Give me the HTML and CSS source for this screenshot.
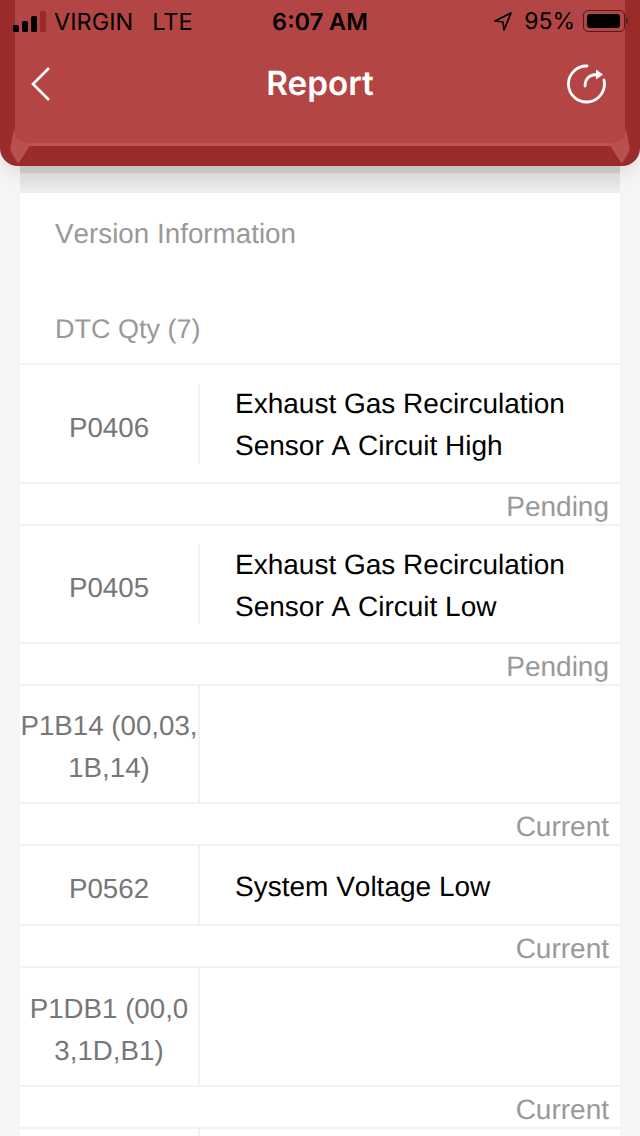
FILE: index.html
```html
<!DOCTYPE html>
<html>
<head>
    <title>Report</title>
    <meta charset="UTF-8">
    <link rel="stylesheet" href="styles.css">
</head>

<body>
    <div class="header">
        <div class="statusBar">
            <div class="statusLeft">
                <svg class="signal" width="33" height="21" viewBox="0 0 33 21">
                    <rect x="0" y="14" width="6" height="7" rx="1.5" fill="#000"/>
                    <rect x="9" y="10" width="6" height="11" rx="1.5" fill="#000"/>
                    <rect x="18" y="5" width="6" height="16" rx="1.5" fill="#000"/>
                    <rect x="27" y="0" width="6" height="21" rx="1.5" fill="#9b2b2a"/>
                </svg>
                <span class="carrier">VIRGIN</span>
                <span class="network">LTE</span>
            </div>
            <div class="clock">6:07 AM</div>
            <div class="statusRight">
                <svg class="arrow" width="18" height="19" viewBox="0 0 18 19">
                    <path d="M17 1 L1 9 L9 10 L10 18 Z" fill="none" stroke="#000" stroke-width="1.7" stroke-linejoin="round"/>
                </svg>
                <span class="percent">95%</span>
                <div class="battery"><div class="batteryFill"></div></div>
                <div class="batteryNub"></div>
            </div>
        </div>
        <div class="navBar">
            <svg class="backIcon" width="20" height="36" viewBox="0 0 20 36">
                <path d="M18 2 L2 18 L18 34" fill="none" stroke="#fff" stroke-width="2.6"/>
            </svg>
            <div class="navTitle">Report</div>
            <svg class="refreshIcon" width="40" height="40" viewBox="0 0 40 40">
                <path d="M21 2 A18 18 0 1 0 38 16" fill="none" stroke="#fff" stroke-width="2.8" stroke-linecap="round"/>
                <path d="M19 22 C19 15 23 10.5 31 10.5" fill="none" stroke="#fff" stroke-width="2.8" stroke-linecap="round"/>
                <path d="M30 5.5 L37 10.5 L30 15.5 Z" fill="#fff"/>
            </svg>
        </div>
        <svg class="bevel bevelLeft" width="32" height="40" viewBox="0 0 32 40">
            <path d="M14 1 L16 12 L31 17 L18 37 L10 23 Z" fill="#b7504e"/>
        </svg>
        <svg class="bevel bevelRight" width="32" height="40" viewBox="0 0 32 40">
            <path d="M14 1 L16 12 L31 17 L18 37 L10 23 Z" fill="#b7504e"/>
        </svg>
    </div>
    <div class="shade"></div>

    <div class="card">
        <div class="infoTitle versionTitle">Version Information</div>
        <div class="infoTitle qtyTitle">DTC Qty (7)</div>

        <div class="dtcRow tallPlus">
            <div class="dtcCode oneLine">P0406</div>
            <div class="dtcText">Exhaust Gas Recirculation<br>Sensor A Circuit High</div>
        </div>
        <div class="dtcStatus">Pending</div>

        <div class="dtcRow tall">
            <div class="dtcCode oneLine">P0405</div>
            <div class="dtcText">Exhaust Gas Recirculation<br>Sensor A Circuit Low</div>
        </div>
        <div class="dtcStatus">Pending</div>

        <div class="dtcRow tall full">
            <div class="dtcCode">P1B14 (00,03,<br>1B,14)</div>
            <div class="dtcText"></div>
        </div>
        <div class="dtcStatus">Current</div>

        <div class="dtcRow short full">
            <div class="dtcCode oneLine">P0562</div>
            <div class="dtcText">System Voltage Low</div>
        </div>
        <div class="dtcStatus">Current</div>

        <div class="dtcRow tallPlus full">
            <div class="dtcCode">P1DB1 (00,0<br>3,1D,B1)</div>
            <div class="dtcText"></div>
        </div>
        <div class="dtcStatus">Current</div>

        <div class="dtcRow lastRow full">
            <div class="dtcCode"></div>
        </div>
    </div>
</body>

</html>
```

FILE: styles.css
```css
html, body {
    margin: 0;
    height: 1136px;
    overflow: hidden;
}

body {
    background-color: #f5f5f5;
    font-family: "Liberation Sans", Arial, sans-serif;
    font-kerning: none;
    text-rendering: geometricPrecision;
}

.header {
    height: 166px;
    position: relative;
    box-sizing: border-box;
    background:
        linear-gradient(#b34644, #b34644) 15px 0 / 610px 143px no-repeat,
        linear-gradient(#bd5654, #bd5654) 15px 143px / 610px 3px no-repeat,
        #9b2b2a;
    border-radius: 0 0 18px 18px;
    box-shadow: 0 9px 14px rgba(0, 0, 0, 0.07);
}

.statusBar {
    height: 42px;
    display: grid;
    grid-template-columns: 1fr auto 1fr;
    align-items: center;
    color: #000;
    font-family: Inter, "Liberation Sans", sans-serif;
    font-kerning: normal;
    font-size: 23.5px;
}

.statusLeft {
    display: flex;
    align-items: center;
    padding-left: 13px;
}

.signal {
    margin-right: 8px;
}

.network {
    margin-left: 19px;
}

.clock {
    font-weight: 600;
    font-size: 23.5px;
}

.statusRight {
    display: flex;
    align-items: center;
    justify-content: flex-end;
    padding-right: 12px;
}

.percent {
    margin-left: 12px;
    font-size: 23px;
}

.battery {
    width: 42px;
    height: 22px;
    margin-left: 8px;
    border: 1px solid #4d1c1c;
    border-radius: 5px;
    padding: 3px;
    box-sizing: border-box;
    flex-shrink: 0;
}

.batteryFill {
    height: 100%;
    width: 33px;
    background-color: #000;
    border-radius: 3px;
}

.batteryNub {
    width: 2px;
    height: 6px;
    margin-left: 1px;
    background-color: #5a2020;
}

.navBar {
    height: 84px;
    display: grid;
    grid-template-columns: 1fr auto 1fr;
    align-items: center;
    padding: 0 31px;
}

.navTitle {
    color: #fff;
    font-size: 33.3px;
    font-weight: 600;
    font-family: Inter, "Liberation Sans", sans-serif;
    font-kerning: normal;
}

.refreshIcon {
    justify-self: end;
    margin-right: 3px;
}

.bevel {
    position: absolute;
    top: 127px;
}

.bevelLeft {
    left: 0;
}

.bevelRight {
    right: 0;
    transform: scaleX(-1);
}

.shade {
    position: relative;
    height: 27px;
    margin: 0 20px;
    background: linear-gradient(#c9c5c4, #c9c5c4 6px, #dcd9d8 8px, #efefef 100%);
}

.card {
    margin: 0 20px;
    background-color: #fff;
}

.infoTitle {
    color: #999;
    font-size: 27.8px;
    padding-left: 35px;
}

.versionTitle {
    height: 96px;
    line-height: 82px;
}

.qtyTitle {
    height: 74px;
    line-height: 80px;
    font-size: 27px;
    border-bottom: 2px solid #f2f2f2;
}

.dtcRow {
    display: flex;
    align-items: center;
    box-sizing: border-box;
    border-bottom: 2px solid #f2f2f2;
}

.tall {
    height: 118px;
}

.tallPlus {
    height: 119px;
}

.short {
    height: 80px;
}

.lastRow {
    height: 7px;
    border-bottom: none;
}

.dtcCode {
    width: 180px;
    height: 78px;
    box-sizing: border-box;
    padding-top: 6px;
    border-right: 2px solid #f2f2f2;
    display: flex;
    align-items: center;
    justify-content: center;
    text-align: center;
    white-space: nowrap;
    color: #777;
    font-size: 27.7px;
    line-height: 42px;
    flex-shrink: 0;
}

.oneLine {
    padding-top: 8px;
}

.full .dtcCode {
    height: 100%;
}

.dtcText {
    padding: 3px 0 0 35px;
    color: #000;
    font-size: 28px;
    line-height: 42px;
}

.dtcStatus {
    height: 42px;
    box-sizing: border-box;
    border-bottom: 2px solid #f2f2f2;
    text-align: right;
    padding-right: 11px;
    color: #999;
    font-size: 28px;
    line-height: 46px;
}
```
